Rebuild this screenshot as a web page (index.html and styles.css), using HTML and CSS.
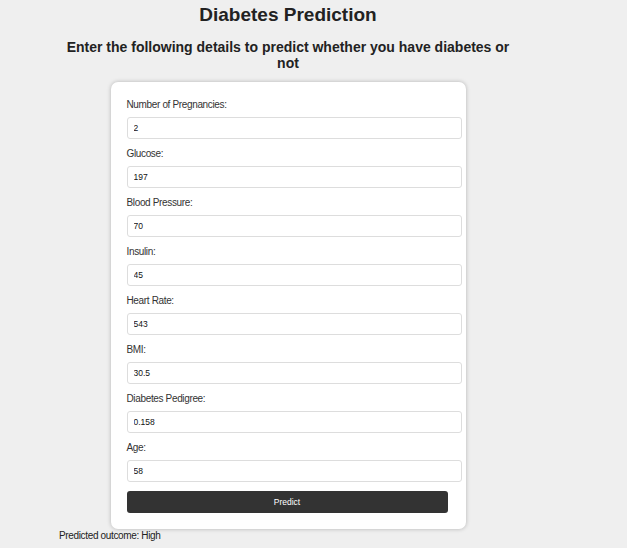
FILE: index.html
```html
<!DOCTYPE html>
<html lang="en">
<head>
    <meta charset="UTF-8">
    <meta name="viewport" content="width=device-width, initial-scale=1.0">
    <title>Diabetes Prediction</title>
    <link rel="stylesheet" href="styles.css">
</head>
<body>
    <div class="container">
        <h1>Diabetes Prediction</h1>
        <h2>Enter the following details to predict whether you have diabetes or not</h2>

        <form class="form-card">
            <label for="pregnancies">Number of Pregnancies:</label>
            <input type="text" id="pregnancies" value="2">

            <label for="glucose">Glucose:</label>
            <input type="text" id="glucose" value="197">

            <label for="bp">Blood Pressure:</label>
            <input type="text" id="bp" value="70">

            <label for="insulin">Insulin:</label>
            <input type="text" id="insulin" value="45">

            <label for="heart">Heart Rate:</label>
            <input type="text" id="heart" value="543">

            <label for="bmi">BMI:</label>
            <input type="text" id="bmi" value="30.5">

            <label for="pedigree">Diabetes Pedigree:</label>
            <input type="text" id="pedigree" value="0.158">

            <label for="age">Age:</label>
            <input type="text" id="age" value="58">

            <button type="button">Predict</button>
        </form>

        <p class="result">Predicted outcome: High</p>
    </div>
</body>
</html>
```

FILE: styles.css
```css
body {
    font-family: "Liberation Sans", Arial, sans-serif;
    background: #efefef;
    margin: 0;
    color: #222;
}
.container {
    width: 460px;
    margin-left: 58px;
}
h1 {
    font-size: 19px;
    text-align: center;
    margin: 4px 0 0;
    line-height: 22px;
    color: #222;
}
h2 {
    font-size: 14px;
    text-align: center;
    margin: 13px 0 0;
    line-height: 16px;
    color: #222;
}
.form-card {
    width: 321px;
    margin: 11px auto 0;
    padding: 17px 18px 16px 16px;
    background: white;
    border-radius: 7px;
    box-shadow: 0 0 4px rgba(0, 0, 0, 0.25);
    display: flex;
    flex-direction: column;
}
label {
    font-size: 10px;
    letter-spacing: -0.35px;
    line-height: 12px;
    color: #333;
    margin-bottom: 6px;
}
input {
    width: 100%;
    height: 20px;
    padding: 0 6px;
    margin: 0 0 9px;
    border: 1px solid #ddd;
    border-radius: 3px;
    font-family: "Liberation Sans", Arial, sans-serif;
    font-size: 8.5px;
    color: #111;
    box-sizing: content-box;
}
button {
    height: 22px;
    background: #333;
    color: white;
    border: none;
    border-radius: 3px;
    font-family: "Liberation Sans", Arial, sans-serif;
    font-size: 8.5px;
    cursor: pointer;
}
.result {
    font-size: 10px;
    letter-spacing: -0.35px;
    margin: 1px 0 0 1px;
    color: #222;
}
```
